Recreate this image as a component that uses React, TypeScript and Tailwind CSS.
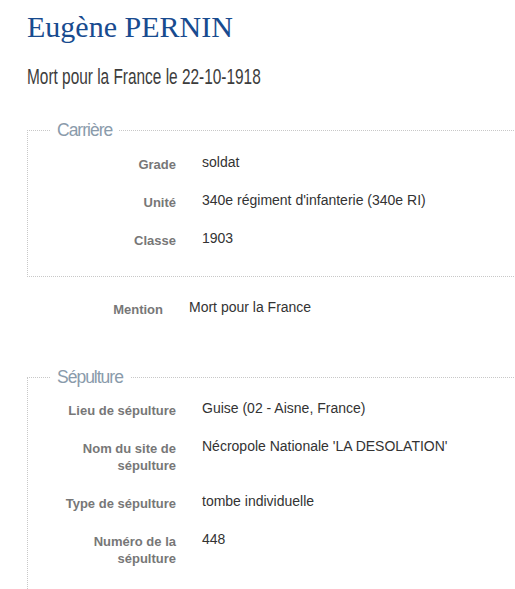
import React from "react";

type Item = { label: string; value: string };

const carriere: Item[] = [
  { label: "Grade", value: "soldat" },
  { label: "Unité", value: "340e régiment d'infanterie (340e RI)" },
  { label: "Classe", value: "1903" },
];

const sepulture: Item[] = [
  { label: "Lieu de sépulture", value: "Guise (02 - Aisne, France)" },
  { label: "Nom du site de sépulture", value: "Nécropole Nationale 'LA DESOLATION'" },
  { label: "Type de sépulture", value: "tombe individuelle" },
  { label: "Numéro de la sépulture", value: "448" },
];

const Row = ({ label, value }: Item) => (
  <div className="flex items-start mb-[19px] last:mb-0 leading-[17px]">
    <div className="w-[136px] shrink-0 text-right text-[13px] font-bold text-[#777] pt-[2px]">
      {label}
    </div>
    <div className="ml-[26px] text-[14px] text-[#333]">{value}</div>
  </div>
);

const Section = ({ title, items, pt }: { title: string; items: Item[]; pt: string }) => (
  <fieldset className="w-[487px] border-l border-t border-b border-dotted border-[#c8c8c8]">
    <legend className="ml-[22px] px-[7px] text-[17.5px] leading-[24px] text-[#8a9bab] tracking-[-1px]">
      {title}
    </legend>
    <div className={`pl-[12px] pb-[27px] ${pt}`}>
      {items.map((it) => (
        <Row key={it.label} {...it} />
      ))}
    </div>
  </fieldset>
);

export default function App() {
  return (
    <div
      className="w-[515px] h-[589px] overflow-hidden bg-white pl-[27px] pt-[9px]"
      style={{ fontFamily: '"Liberation Sans", Arial, sans-serif' }}
    >
      <h1
        className="text-[30px] leading-[36px] text-[#184b8f]"
        style={{ fontFamily: '"Liberation Serif", "Times New Roman", serif' }}
      >
        Eugène PERNIN
      </h1>
      <h2 className="mt-[18px] text-[22px] leading-[28px] text-[#3c3c3c] whitespace-nowrap">
        <span className="inline-block origin-left scale-x-[0.7]">Mort pour la France le 22-10-1918</span>
      </h2>

      <div className="mt-[27px]">
        <Section title="Carrière" items={carriere} pt="pt-[12px]" />
      </div>

      <div className="mt-[22px]">
        <Row label="Mention" value="Mort pour la France" />
      </div>

      <div className="mt-[47px]">
        <Section title="Sépulture" items={sepulture} pt="pt-[11px]" />
      </div>
    </div>
  );
}
